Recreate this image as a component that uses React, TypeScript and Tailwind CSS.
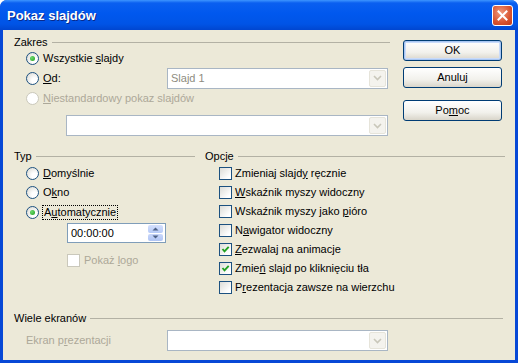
import React from 'react';

const Radio: React.FC<{ checked?: boolean; disabled?: boolean }> = ({ checked, disabled }) => (
  <span
    className={
      'relative inline-block w-[13px] h-[13px] shrink-0 rounded-full border ' +
      (disabled
        ? 'border-[#CAC8BB] bg-white'
        : 'border-[#1C5180] bg-[radial-gradient(circle_at_70%_70%,#FFFFFF_25%,#D6D5CE_100%)]')
    }
  >
    {checked && (
      <span className="absolute left-[3px] top-[3px] w-[5px] h-[5px] rounded-full bg-[radial-gradient(circle_at_35%_35%,#6CD86C,#21A121)]" />
    )}
  </span>
);

const Checkbox: React.FC<{ checked?: boolean; disabled?: boolean }> = ({ checked, disabled }) => (
  <span
    className={
      'relative inline-block w-[13px] h-[13px] shrink-0 border ' +
      (disabled
        ? 'border-[#CAC8BB] bg-white'
        : 'border-[#1C5180] bg-[linear-gradient(135deg,#DCDCD7,#FFFFFF_80%)]')
    }
  >
    {checked && (
      <svg viewBox="0 0 11 11" className="absolute left-0 top-0 w-[11px] h-[11px]">
        <path d="M2.5 5 L4.5 7.3 L8.7 2.8" stroke="#21A121" strokeWidth="1.9" fill="none" />
      </svg>
    )}
  </span>
);

const Combo: React.FC<{ text?: string; className: string }> = ({ text, className }) => (
  <div className={'flex items-center h-[21px] border border-[#A9B6C4] bg-white ' + className}>
    <span className="flex-1 pl-[3px] text-[#8E8C80] leading-none">{text}</span>
    <span className="w-[17px] h-[17px] mr-[1px] rounded-[2px] border border-[#E6E4DA] bg-[#F4F3EE] flex items-center justify-center">
      <svg viewBox="0 0 9 6" className="w-[9px] h-[6px]">
        <path d="M1 1 L4.5 4.5 L8 1" stroke="#C9C7BA" strokeWidth="1.6" fill="none" />
      </svg>
    </span>
  </div>
);

const GroupHeader: React.FC<{ label: string }> = ({ label }) => (
  <div className="flex items-center h-[14px]">
    <span className="leading-none">{label}</span>
    <div className="flex-1 h-px ml-[4px] bg-[#B3B1A4]" />
  </div>
);

const XPButton: React.FC<{ children: React.ReactNode; main?: boolean; className?: string }> = ({ children, main, className }) => (
  <div
    className={
      'h-[21px] w-[99px] flex items-center justify-center rounded-[3px] border border-[#003C74] bg-[linear-gradient(to_bottom,#FFFFFF,#F2F1EC_60%,#D9D5CA)] leading-none ' +
      (main ? 'shadow-[inset_0_0_0_1px_#A8C6F2,inset_0_0_0_2px_#C9DBFA] ' : '') +
      (className ?? '')
    }
  >
    {children}
  </div>
);

const Row: React.FC<{ h: string; children: React.ReactNode; className?: string }> = ({ h, children, className }) => (
  <div className={'flex items-center ' + h + ' ' + (className ?? '')}>{children}</div>
);

const options: { label: React.ReactNode; checked?: boolean }[] = [
  { label: <>Zmieniaj slajd<u className="underline-offset-1">y</u> ręcznie</> },
  { label: <><u className="underline-offset-1">W</u>skaźnik myszy widoczny</> },
  { label: <>Wskaźnik myszy jako <u className="underline-offset-1">p</u>ióro</> },
  { label: <>N<u className="underline-offset-1">a</u>wigator widoczny</> },
  { label: <><u className="underline-offset-1">Z</u>ezwalaj na animacje</>, checked: true },
  { label: <>Zmie<u className="underline-offset-1">ń</u> slajd po kliknięciu tła</>, checked: true },
  { label: <>P<u className="underline-offset-1">r</u>ezentacja zawsze na wierzchu</> },
];

export default function App() {
  return (
    <div className="w-[518px] h-[363px] flex flex-col rounded-t-[7px] overflow-hidden bg-[#0748D6] font-['Liberation_Sans',Arial,sans-serif] text-[11px] text-black">
      {/* title bar */}
      <div className="h-[30px] shrink-0 flex items-center pl-[7px] pr-[5px] bg-[linear-gradient(to_bottom,#3D95FF_0%,#0A5FF0_10%,#0058EE_45%,#0054E6_80%,#0046D0_100%)]">
        <span className="text-white font-bold text-[13px] leading-none [text-shadow:1px_1px_0_#0A2A8A]">
          Pokaz slajdów
        </span>
        <div className="ml-auto w-[21px] h-[21px] rounded-[3px] border border-white bg-[radial-gradient(circle_at_40%_35%,#F09A7E,#D8532F_60%,#C13A19)] flex items-center justify-center">
          <svg viewBox="0 0 11 11" className="w-[11px] h-[11px]">
            <path d="M1.5 1.5 L9.5 9.5 M9.5 1.5 L1.5 9.5" stroke="white" strokeWidth="2" strokeLinecap="square" />
          </svg>
        </div>
      </div>

      {/* dialog body */}
      <div className="flex-1 mx-[3px] mb-[3px] bg-[#ECE9D8] flex flex-col">
        <div className="flex">
          <div className="w-[387px] pl-[11px] pt-[5px]">
            <GroupHeader label="Zakres" />
            <div className="pl-[12px]">
              <Row h="h-[19px]">
                <Radio checked />
                <span className="ml-[4px] leading-none">Wszystkie <u className="underline-offset-1">s</u>lajdy</span>
              </Row>
              <Row h="h-[20px]">
                <div className="w-[141px] flex items-center">
                  <Radio />
                  <span className="ml-[4px] leading-none"><u className="underline-offset-1">O</u>d:</span>
                </div>
                <Combo text="Slajd 1" className="w-[221px]" />
              </Row>
              <Row h="h-[20px]" className="text-[#ACA899]">
                <Radio disabled />
                <span className="ml-[4px] leading-none"><u className="underline-offset-1">N</u>iestandardowy pokaz slajdów</span>
              </Row>
            </div>
            <Combo className="w-[322px] mt-[7px] ml-[52px]" />
          </div>
          <div className="ml-[13px] w-[99px] pt-[10px] flex flex-col">
            <XPButton main>OK</XPButton>
            <XPButton className="mt-[6px]">Anuluj</XPButton>
            <XPButton className="mt-[12px]">Po<u className="underline-offset-1">m</u>oc</XPButton>
          </div>
        </div>

        <div className="flex pl-[11px] mt-[13px]">
          <div className="w-[181px]">
            <GroupHeader label="Typ" />
            <div className="pl-[12px]">
              <Row h="h-[20px]">
                <Radio />
                <span className="ml-[4px] leading-none"><u className="underline-offset-1">D</u>omyślnie</span>
              </Row>
              <Row h="h-[19px]">
                <Radio />
                <span className="ml-[4px] leading-none">O<u className="underline-offset-1">k</u>no</span>
              </Row>
              <Row h="h-[20px]">
                <Radio checked />
                <span className="ml-[3px] px-[1px] py-[1px] leading-none border border-dotted border-black">
                  A<u className="underline-offset-1">u</u>tomatycznie
                </span>
              </Row>
              <div className="mt-[1px] ml-[41px] w-[99px] h-[20px] flex items-center border border-[#7F9DB9] bg-white">
                <span className="flex-1 pl-[3px] leading-none">00:00:00</span>
                <div className="w-[15px] h-[16px] mr-[2px] flex flex-col gap-px">
                  <div className="flex-1 rounded-[2px] bg-[linear-gradient(to_bottom,#D4E0FC,#B6CAF7)] flex items-center justify-center">
                    <svg viewBox="0 0 7 4" className="w-[7px] h-[4px]"><path d="M0.5 3.5 L3.5 0.5 L6.5 3.5Z" fill="#4D6185" /></svg>
                  </div>
                  <div className="flex-1 rounded-[2px] bg-[linear-gradient(to_bottom,#C9D7FA,#AFC4F4)] flex items-center justify-center">
                    <svg viewBox="0 0 7 4" className="w-[7px] h-[4px]"><path d="M0.5 0.5 L3.5 3.5 L6.5 0.5Z" fill="#4D6185" /></svg>
                  </div>
                </div>
              </div>
              <Row h="h-[18px]" className="mt-[8px] ml-[41px] text-[#ACA899]">
                <Checkbox disabled />
                <span className="ml-[4px] leading-none">Pokaż <u className="underline-offset-1">l</u>ogo</span>
              </Row>
            </div>
          </div>
          <div className="ml-[10px] w-[300px]">
            <GroupHeader label="Opcje" />
            <div className="pl-[14px] mt-[1px]">
              {options.map((o, i) => (
                <Row key={i} h="h-[19px]">
                  <Checkbox checked={o.checked} />
                  <span className="ml-[3px] leading-none">{o.label}</span>
                </Row>
              ))}
            </div>
          </div>
        </div>

        <div className="w-[500px] pl-[11px] mt-[14px]">
          <GroupHeader label="Wiele ekranów" />
          <div className="mt-[5px] pl-[12px] h-[21px] flex items-center">
            <span className="w-[141px] text-[#ACA899] leading-none">
              Ekran p<u className="underline-offset-1">r</u>ezentacji
            </span>
            <Combo className="w-[221px]" />
          </div>
        </div>
      </div>
    </div>
  );
}
